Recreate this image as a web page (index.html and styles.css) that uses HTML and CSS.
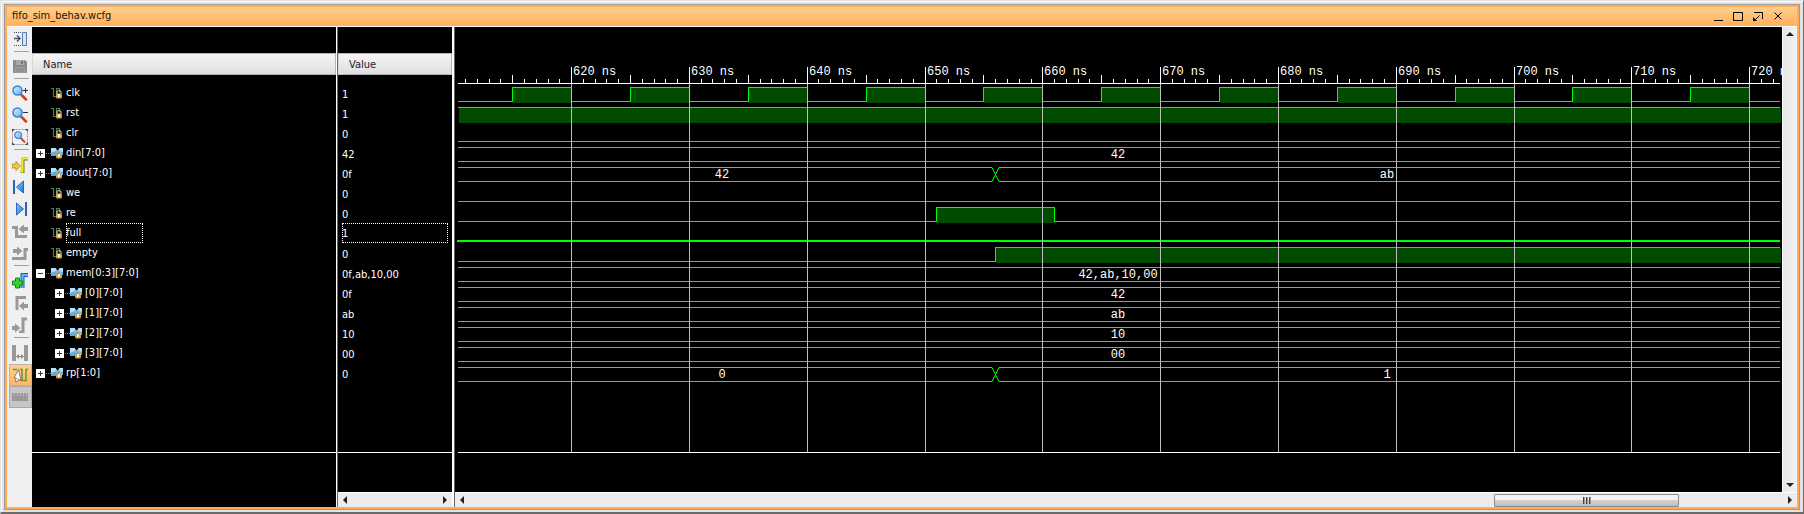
FILE: index.html
```html
<!DOCTYPE html>
<html lang="en">
<head>
<meta charset="utf-8">
<title>fifo_sim_behav.wcfg</title>
<link rel="stylesheet" href="styles.css">
</head>
<body>
<svg class="defs" aria-hidden="true">
  <defs>
    <linearGradient id="lens" x1="0" y1="0" x2="1" y2="1"><stop offset="0" stop-color="#d8f2ff"/><stop offset="1" stop-color="#5fb0f0"/></linearGradient>
    <linearGradient id="blue" x1="0" y1="0" x2="1" y2="1"><stop offset="0" stop-color="#8fd0ff"/><stop offset="1" stop-color="#1a6fd8"/></linearGradient>
    <symbol id="lock" viewBox="0 0 12 12">
      <path d="M6 7V5.500a2 2 0 0 1 4 0V7" fill="none" stroke="#b8b8b8" stroke-width="1.200"/>
      <rect x="5" y="6.500" width="6" height="5" rx="1.500" fill="#d8a548"/>
      <rect x="7" y="7" width="2" height="3" fill="#fff0c0"/>
    </symbol>
    <symbol id="scalar" viewBox="0 0 12 12">
      <path d="M0 1.500h2.500v8h3v-8h3v4" fill="none" stroke="#557f50" stroke-width="1.200"/>
      <use href="#lock" width="12" height="12"/>
    </symbol>
    <symbol id="bus" viewBox="0 0 12 12">
      <path d="M0 1h4.500l2 3 2-3H12v7H8.500L6.500 5.500 4.500 9H0z" fill="#5aaee6"/>
      <path d="M0 1h4.500l1.500 2.500L0 6zM12 1H9L7 4l5 1z" fill="#b5e0fa"/>
      <use href="#lock" width="12" height="12"/>
    </symbol>
    <symbol id="magnifier" viewBox="0 0 16 16">
      <path d="M9.500 10l4.500 4.500" stroke="#d43a20" stroke-width="2.500" stroke-linecap="round"/>
      <path d="M8.500 8.500l2 2" stroke="#777" stroke-width="1.500"/>
      <circle cx="5.500" cy="5.500" r="4.500" fill="url(#lens)" stroke="#3f7fd6" stroke-width="1.500"/>
    </symbol>
  </defs>
</svg>
<div class="frame">
<main class="window">
  <header class="titlebar">
    <h1 class="title">fifo_sim_behav.wcfg</h1>
    <button class="winbtn" aria-label="Minimize"><svg width="12" height="12"><path d="M2 10h9v1H2z" fill="#000"/></svg></button>
    <button class="winbtn" aria-label="Maximize"><svg width="12" height="12"><path d="M1.500 2.500h9v8h-9z" fill="none" stroke="#000"/></svg></button>
    <button class="winbtn" aria-label="Float"><svg width="12" height="12"><path d="M2 2.500h8.500V9M7.500 5.500l-4 4" fill="none" stroke="#000"/><path d="M1 7v4h4z" fill="#000"/></svg></button>
    <button class="winbtn" aria-label="Close"><svg width="12" height="12"><path d="M2.500 2.500l7 7M9.500 2.500l-7 7" fill="none" stroke="#000"/></svg></button>
  </header>
  <div class="content">
    <nav class="toolbar" aria-label="Wave tools">
      <button class="tool" aria-label="Dock"><svg width="16" height="16"><path d="M2 1.500h8M2 14.500h8" stroke="#3a4a7a" stroke-dasharray="1 1"/><path d="M2 7.500h5" stroke="#44506e" stroke-width="1.500"/><path d="M5 4.500l3 3-3 3" fill="none" stroke="#44506e" stroke-width="1.500"/><path d="M10.500 1.500h4v13h-4z" fill="#d5e5f8" stroke="#5a78a8"/></svg></button>
      <hr class="sep">
      <button class="tool" aria-label="Save"><svg width="16" height="16"><path d="M1 2h12l2 2v11H1z" fill="#8b8b8b"/><path d="M4 2h8v5H4z" fill="#a9a9a9"/><path d="M9 3h2v3H9z" fill="#777"/><path d="M3 9h10v6H3z" fill="#9b9b9b"/><path d="M4 11h8M4 13h8" stroke="#858585"/></svg></button>
      <hr class="sep">
      <button class="tool" aria-label="Zoom in"><svg width="16" height="16"><use href="#magnifier"/><path d="M11 5.500h5M13.500 3v5" stroke="#333"/></svg></button>
      <button class="tool" aria-label="Zoom out"><svg width="16" height="16"><use href="#magnifier"/><path d="M11 5.500h5" stroke="#333"/></svg></button>
      <button class="tool" aria-label="Zoom fit"><svg width="16" height="16"><rect x=".5" y=".5" width="15" height="15" fill="none" stroke="#999" stroke-dasharray="2 1"/><path d="M0 0h3L0 3zM16 0h-3l3 3zM0 16h3l-3-3zM16 16h-3l3-3z" fill="#444"/><use href="#magnifier" x="2" y="2" width="12" height="12"/></svg></button>
      <hr class="sep major">
      <button class="tool" aria-label="Go to cursor"><svg width="16" height="16"><path d="M8 15h3V2h5" fill="none" stroke="#77772a" stroke-width="3"/><path d="M8 14.500h2.500V1.500H16" fill="none" stroke="#f4ec20" stroke-width="2"/><path d="M0 7h4V4.500L8.500 9 4 13.500V11H0z" fill="#f0c83c" stroke="#a88420" stroke-width=".8"/></svg></button>
      <button class="tool" aria-label="Previous transition"><svg width="16" height="16"><path d="M1 1h2v14H1z" fill="#2d63ae"/><path d="M11.500 2v12L4.500 8z" fill="url(#blue)" stroke="#2468c0"/></svg></button>
      <button class="tool" aria-label="Next transition"><svg width="16" height="16"><path d="M13 1h2v14h-2z" fill="#2d63ae"/><path d="M4.500 2v12L11.500 8z" fill="url(#blue)" stroke="#2468c0"/></svg></button>
      <button class="tool" aria-label="Previous marker"><svg width="16" height="16"><path d="M0 4.500h4.500v9H15" fill="none" stroke="#999" stroke-width="3"/><path d="M16 4h-4V1.500L6.500 6l5.500 4.500V8h4z" fill="#999"/></svg></button>
      <button class="tool" aria-label="Next marker"><svg width="16" height="16"><path d="M0 13.500h13v-9h3" fill="none" stroke="#999" stroke-width="3"/><path d="M1 4h4V1.500L10.500 6 5 10.500V8H1z" fill="#999"/></svg></button>
      <hr class="sep major">
      <button class="tool" aria-label="Add marker"><svg width="16" height="16"><path d="M10.500 15V2H16" fill="none" stroke="#1767a8" stroke-width="4"/><path d="M10.500 15V2H16" fill="none" stroke="#62b6f2" stroke-width="2"/><path d="M3.500 5h4v3h3v4h-3v3h-4v-3h-3V8h3z" fill="#35d52a" stroke="#128812"/></svg></button>
      <button class="tool" aria-label="Move left"><svg width="16" height="16"><path d="M14 2.500H5V15" fill="none" stroke="#999" stroke-width="3"/><path d="M16 9h-4V6.500L7 11l5 4.500V13h4z" fill="#999"/></svg></button>
      <button class="tool" aria-label="Move right"><svg width="16" height="16"><path d="M15 2H11V15H7" fill="none" stroke="#999" stroke-width="3"/><path d="M0 9h3V6.500L8.500 11 3 15.500V13H0z" fill="#999"/></svg></button>
      <hr class="sep major">
      <button class="tool" aria-label="Measure"><svg width="16" height="16"><path d="M2 0v16M14 0v16" stroke="#999" stroke-width="4"/><path d="M5 11.500h6" stroke="#888"/><path d="M7 9v5l-3-2.500zM9 9v5l3-2.500z" fill="#888"/></svg></button>
      <button class="tool active" aria-label="Snap to transition" aria-pressed="true"><svg width="16" height="16"><path d="M1 2.500h4M8 2.500h2v11h4v-11h2" fill="none" stroke="#6f9330" stroke-width="1.500"/><path d="M6.500 2.500L2 11h2.500l-1.500 3 2 1 1.500-3 2.500 2z" fill="#fff" stroke="#666" stroke-width=".8"/></svg></button>
      <button class="tool pressed" aria-label="Floating ruler"><svg width="16" height="16"><path d="M0 4h16v8H0z" fill="#999"/><path d="M2.500 4v3M5.500 4v3M8.500 4v3M11.500 4v3M14.500 4v3" stroke="#bbb"/></svg></button>
    </nav>

    <section class="pane names">
      <h2 class="head">Name</h2>
      <ul class="rows">
        <li class="row"><svg class="sig"><use href="#scalar"/></svg><span>clk</span></li>
        <li class="row"><svg class="sig"><use href="#scalar"/></svg><span>rst</span></li>
        <li class="row"><svg class="sig"><use href="#scalar"/></svg><span>clr</span></li>
        <li class="row node"><button class="exp" aria-label="Expand din"></button><svg class="sig"><use href="#bus"/></svg><span>din[7:0]</span></li>
        <li class="row node"><button class="exp" aria-label="Expand dout"></button><svg class="sig"><use href="#bus"/></svg><span>dout[7:0]</span></li>
        <li class="row"><svg class="sig"><use href="#scalar"/></svg><span>we</span></li>
        <li class="row"><svg class="sig"><use href="#scalar"/></svg><span>re</span></li>
        <li class="row"><svg class="sig"><use href="#scalar"/></svg><span class="focus">full</span></li>
        <li class="row"><svg class="sig"><use href="#scalar"/></svg><span>empty</span></li>
        <li class="row node"><button class="exp open" aria-label="Collapse mem"></button><svg class="sig"><use href="#bus"/></svg><span>mem[0:3][7:0]</span></li>
        <li class="row node child"><button class="exp" aria-label="Expand mem 0"></button><svg class="sig"><use href="#bus"/></svg><span>[0][7:0]</span></li>
        <li class="row node child"><button class="exp" aria-label="Expand mem 1"></button><svg class="sig"><use href="#bus"/></svg><span>[1][7:0]</span></li>
        <li class="row node child"><button class="exp" aria-label="Expand mem 2"></button><svg class="sig"><use href="#bus"/></svg><span>[2][7:0]</span></li>
        <li class="row node child"><button class="exp" aria-label="Expand mem 3"></button><svg class="sig"><use href="#bus"/></svg><span>[3][7:0]</span></li>
        <li class="row node"><button class="exp" aria-label="Expand rp"></button><svg class="sig"><use href="#bus"/></svg><span>rp[1:0]</span></li>
      </ul>
      <div class="foot"></div>
    </section>
    <div class="split"></div>
    <section class="pane values">
      <h2 class="head">Value</h2>
      <ul class="rows">
        <li class="val">1</li><li class="val">1</li><li class="val">0</li><li class="val">42</li><li class="val">0f</li>
        <li class="val">0</li><li class="val">0</li><li class="val focus">1</li><li class="val">0</li><li class="val">0f,ab,10,00</li>
        <li class="val">0f</li><li class="val">ab</li><li class="val">10</li><li class="val">00</li><li class="val">0</li>
      </ul>
      <div class="foot">
        <div class="hscroll"><button class="arrow left" aria-label="Scroll values left"></button><button class="arrow right" aria-label="Scroll values right"></button></div>
      </div>
    </section>
    <div class="split wide"></div>
    <section class="waves">
      <div class="view">
        <svg id="wave" class="wave" role="img" aria-label="Signal waveforms"></svg>
        <div class="vscroll"><button class="arrow up" aria-label="Scroll up"></button><button class="arrow down" aria-label="Scroll down"></button></div>
      </div>
      <div class="hscroll">
        <button class="arrow left" aria-label="Scroll left"></button>
        <button class="thumb" aria-label="Time position"><i></i><i></i><i></i></button>
        <button class="arrow right" aria-label="Scroll right"></button>
      </div>
    </section>
  </div>
</main>
</div>
<script src="wave.js"></script>
</body>
</html>
```
FILE: styles.css
```css
* { box-sizing: border-box; }
body {
  margin: 0;
  height: 100vh;
  font: 11px/20px "DejaVu Sans Condensed", "DejaVu Sans", sans-serif;
  color: #111;
}
button { padding: 0; margin: 0; border: 0; background: none; font: inherit; }
h1, h2 { margin: 0; font-size: inherit; font-weight: normal; }
ul { margin: 0; padding: 0; list-style: none; }
.defs { position: absolute; width: 0; height: 0; }

.frame {
  height: 100%;
  padding: 3px 3px 2px;
  background: #e2e2e2;
  border: solid #6b6b6b;
  border-width: 1px 1px 2px 1px;
  border-top-color: #e0e0e0;
  border-left-color: #e0e0e0;
  box-shadow: inset 1px 1px #fff;
}
.window {
  height: 100%;
  display: flex;
  flex-direction: column;
  border: 1px solid #9b9b9b;
  background: #ffab57;
  padding: 2px;
}
.titlebar {
  display: flex;
  align-items: flex-start;
  height: 20px;
  padding: 0 9px 0 5px;
  background: linear-gradient(#ffd08c, #ffb05c);
  border-bottom: 1px solid #fff;
}
.title { flex: 1; line-height: 18px; color: #1c1408; }
.winbtn { width: 20px; height: 18px; display: grid; place-items: center; }
.content { flex: 1; min-height: 0; display: flex; background: #000; }

.toolbar { width: 25px; padding: 1px 0 0 2px; background: #f0f0f0; }
.tool { width: 23px; height: 22px; display: flex; align-items: center; padding-left: 3px; }
.tool.active { padding-left: 2px; border: 1px solid #b5b5b5; background: linear-gradient(#ffcf8a, #ffb663); }
.tool.pressed { padding-left: 2px; border: 1px solid #a8a8a8; background: #c6c6c6; }
.sep { width: 15px; height: 1px; margin: 1px 0 3px 5px; border: 0; background: #a0a0a0; }
.sep.major { margin-bottom: 4px; }

.pane { display: flex; flex-direction: column; padding-top: 26px; color: #fff; }
.names { width: 304px; }
.values { width: 114px; }
.head {
  height: 22px;
  padding-left: 10px;
  line-height: 21px;
  color: #1a1a2a;
  background: linear-gradient(#f6f6f6, #dedee0);
  border: 1px solid #b4b4b4;
  border-left-color: #d8d8d8;
}
.rows { flex: 1; padding-top: 8px; border-bottom: 1px solid #fff; }
.row { height: 20px; line-height: 22px; display: flex; align-items: center; padding-left: 19px; }
.row.node { padding-left: 4px; }
.row.child { padding-left: 23px; }
.sig { width: 12px; height: 12px; margin-right: 3px; }
.exp {
  width: 9px;
  height: 9px;
  margin-right: 6px;
  background:
    linear-gradient(#26365e, #26365e) center / 5px 1px no-repeat,
    linear-gradient(#26365e, #26365e) center / 1px 5px no-repeat,
    #fff;
  position: relative;
}
.exp.open { background: linear-gradient(#26365e, #26365e) center / 5px 1px no-repeat, #fff; }
.exp::after { content: ""; position: absolute; left: 10px; top: 4px; width: 5px; border-top: 1px dotted #888; }
.row .focus { width: 77px; height: 20px; line-height: 20px; outline: 1px dotted #fff; outline-offset: -1px; }
.val { height: 20px; padding-left: 4px; line-height: 23px; }
.val.focus { line-height: 22px; margin: 0 4px; padding: 0; outline: 1px dotted #fff; outline-offset: -1px; }
.foot { height: 54px; display: flex; flex-direction: column; justify-content: flex-end; }
.split { width: 2px; border-left: 1px solid #fff; background: #666; }
.split.wide { width: 3px; border-left-width: 2px; }

.waves { flex: 1; min-width: 0; display: flex; flex-direction: column; }
.view { flex: 1; min-height: 0; display: flex; }
.wave { flex: 1; min-width: 0; height: 100%; font: 12px "Liberation Mono", monospace; fill: #fff; }
.vscroll {
  width: 15px;
  display: flex;
  flex-direction: column;
  justify-content: space-between;
  border-left: 1px solid #fff;
  background: linear-gradient(90deg, #e6e6e6, #f1f1f1);
}
.hscroll {
  height: 15px;
  display: flex;
  align-items: center;
  border-top: 1px solid #fff;
  background: #ececec;
}
.arrow { width: 14px; height: 14px; display: grid; place-items: center; }
.arrow::before { content: ""; border: 4px solid transparent; }
.left::before { border-right-color: #222; border-left-width: 0; }
.right::before { border-left-color: #222; border-right-width: 0; }
.up::before { border-bottom-color: #222; border-top-width: 0; }
.down::before { border-top-color: #222; border-bottom-width: 0; }
.right { margin-left: auto; }
.thumb + .right { margin-left: 0; }
.thumb {
  width: 185px;
  height: 13px;
  margin: 0 104px 0 auto;
  display: flex;
  justify-content: center;
  align-items: center;
  gap: 1px;
  border: 1px solid #8c8c8c;
  border-radius: 1px;
  background: linear-gradient(#f3f3f3 45%, #d2d2d2 50%, #bcbcbc);
}
.thumb i { width: 2px; height: 7px; border-left: 1px solid #444; background: #999; }
```
FILE: wave.js
```js
const NS = "http://www.w3.org/2000/svg";
const svg = document.getElementById("wave");

const LEFT = 3, PX_PER_NS = 11.78, ORIGIN = 116.6, ORIGIN_NS = 620;
const RULER = 56, ROW0 = 60, PITCH = 20, SWING = 14;
const GREEN = "#00ff00", FILL = "#004b00";

const clock = [];
for (let t = 615; t < 900; t += 10) clock.push([t, 1], [t + 5, 0]);

const signals = [
  { bits: [[0, 0], ...clock] },
  { bits: [[0, 1]] },
  { bits: [[0, 0]] },
  { bus: [[0, "42"]] },
  { bus: [[0, "42"], [656, "ab"]] },
  { bits: [[0, 0]] },
  { bits: [[0, 0], [651, 1], [661, 0]] },
  { bits: [[0, 0]], selected: true },
  { bits: [[0, 0], [656, 1]] },
  { bus: [[0, "42,ab,10,00"]] },
  { bus: [[0, "42"]] },
  { bus: [[0, "ab"]] },
  { bus: [[0, "10"]] },
  { bus: [[0, "00"]] },
  { bus: [[0, "0"], [656, "1"]] }
];

function add(tag, attrs, text) {
  const el = document.createElementNS(NS, tag);
  for (const k in attrs) el.setAttribute(k, attrs[k]);
  if (text) el.textContent = text;
  svg.append(el);
}
function rect(x, y, width, height, fill) {
  if (width > 0 && height > 0) add("rect", { x, y, width, height, fill });
}
const xOf = t => Math.floor(ORIGIN + (t - ORIGIN_NS) * PX_PER_NS);

function draw() {
  svg.replaceChildren();
  const width = svg.clientWidth, right = width - 2, bottom = svg.clientHeight - 40;

  signals.forEach((s, i) => {
    const hi = ROW0 + i * PITCH, lo = hi + SWING;
    const list = s.bits || s.bus;
    list.forEach(([t, v], n) => {
      const x0 = Math.max(LEFT, xOf(t));
      const x1 = Math.min(right, n + 1 < list.length ? xOf(list[n + 1][0]) : right);
      if (x0 >= right) return;
      if (s.bits) {
        if (v) rect(x0 + 1, hi + 1, x1 - x0, SWING + 1, FILL);
        if (s.selected) rect(x0 - 1, lo - 1, x1 - x0 + 1, 2, GREEN);
        else rect(x0, v ? hi : lo, x1 - x0, 1, GREEN);
        if (n) rect(x0, hi, 1, SWING + 1, GREEN);
      } else {
        const a = n ? x0 + 4 : x0, b = x1 < right ? x1 - 3 : x1;
        rect(a, hi, b - a, 1, GREEN);
        rect(a, lo, b - a, 1, GREEN);
        if (n) add("path", {
          d: `M${x0 - 3} ${hi + .5}L${x0 + 4} ${lo + .5}M${x0 + 4} ${hi + .5}L${x0 - 3} ${lo + .5}`,
          stroke: GREEN, fill: "none"
        });
        // A segment that ends in a transition centres its label ahead of the crossing.
        const from = x1 < right ? x0 - 8 : x0;
        add("text", { x: Math.round((from + x1) / 2) - 1, y: hi + 11, "text-anchor": "middle" }, v);
      }
    });
  });

  rect(LEFT, RULER, right - LEFT, 1, "#fff");
  rect(LEFT, bottom, right - LEFT, 1, "#fff");
  for (let t = 611; xOf(t) < right; t++) {
    const x = xOf(t);
    if (t % 10 === 0) {
      rect(x, RULER, 1, bottom - RULER, "#bdbdbd");
      rect(x, RULER - 16, 1, 17, "#fff");
      add("text", { x: x + 2, y: RULER - 8 }, t + " ns");
    } else {
      const h = t % 5 === 0 ? 8 : 4;
      rect(x, RULER - h, 1, h, "#fff");
    }
  }
}
draw();
addEventListener("resize", draw);
```
